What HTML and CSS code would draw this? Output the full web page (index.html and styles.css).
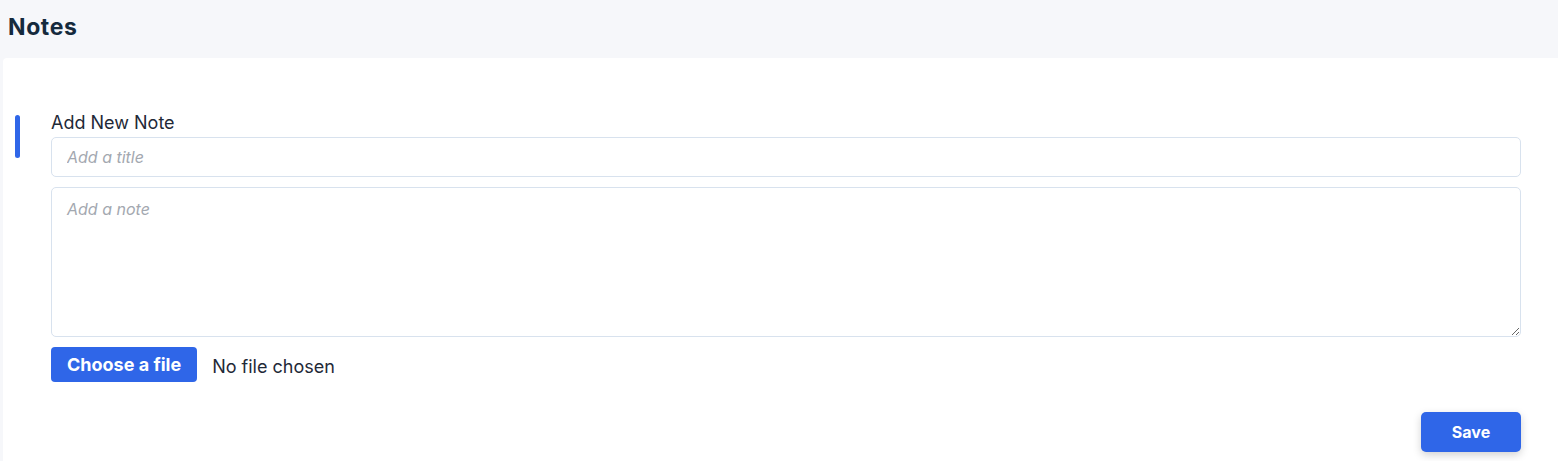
FILE: index.html
```html
<!doctype html>
<html lang="en">
  <head>
    <meta charset="UTF-8" />
    <meta name="viewport" content="width=device-width, initial-scale=1.0" />
    <title>Notes</title>
    <link rel="stylesheet" href="styles.css">
  </head>
  <body>
    <header class="page-header">
      <h1>Notes</h1>
    </header>

    <main class="notes-card">
      <div class="note-form">
        <div class="accent-bar"></div>
        <div class="form-body">
          <label class="form-label" for="note-title">Add New Note</label>
          <input id="note-title" class="field" type="text" placeholder="Add a title" />
          <textarea class="field field-note" placeholder="Add a note"></textarea>

          <div class="file-row">
            <label class="file-button" for="note-file">Choose a file</label>
            <input id="note-file" class="file-input" type="file" />
            <span class="file-name">No file chosen</span>
          </div>

          <div class="actions">
            <button class="save-button" type="button">Save</button>
          </div>
        </div>
      </div>
    </main>
  </body>
</html>
```

FILE: styles.css
```css
:root {
  --color-primary: #2f66e8;
  --color-page: #f6f7fa;
  --color-title: #152a3d;
  --color-text: #1f2937;
  --color-border: #d8e2ee;
  --color-placeholder: #a3a8b0;
  --font-sans: Inter, "Noto Sans", sans-serif;
}

body {
  margin: 0;
  background: var(--color-page);
  font-family: var(--font-sans);
  color: var(--color-text);
}

.page-header {
  height: 58px;
  padding: 0 8px;
  box-sizing: border-box;
}

.page-header h1 {
  margin: 0;
  padding-top: 12px;
  font-size: 23px;
  line-height: 30px;
  font-weight: 700;
  letter-spacing: 0.6px;
  color: var(--color-title);
}

.notes-card {
  margin-left: 3px;
  background: white;
  border-top-left-radius: 4px;
  padding: 54px 37px 9px 12px;
  min-height: 403px;
  box-sizing: border-box;
}

.note-form {
  display: flex;
  gap: 31px;
}

.accent-bar {
  flex: none;
  width: 5px;
  height: 43px;
  margin-top: 3px;
  border-radius: 3px;
  background: var(--color-primary);
}

.form-body {
  flex: 1;
  display: flex;
  flex-direction: column;
}

.form-label {
  font-size: 18px;
  line-height: 22px;
  margin-bottom: 3px;
  color: var(--color-text);
}

.field {
  font-family: var(--font-sans);
  font-size: 16px;
  color: var(--color-text);
  border: 1px solid var(--color-border);
  border-radius: 5px;
  padding: 0 15px;
  height: 40px;
  box-sizing: border-box;
  outline: none;
  margin-bottom: 10px;
}

.field::placeholder {
  color: var(--color-placeholder);
  font-style: italic;
}

.field-note {
  height: 150px;
  padding-top: 11px;
  resize: vertical;
}

.file-row {
  display: flex;
  align-items: center;
  gap: 15px;
}

.file-button {
  background: var(--color-primary);
  color: white;
  font-size: 18px;
  font-weight: 700;
  height: 35px;
  line-height: 35px;
  padding: 0 16px;
  border-radius: 4px;
  cursor: pointer;
}

.file-input {
  display: none;
}

.file-name {
  font-size: 18px;
  padding-top: 4px;
  color: var(--color-text);
}

.actions {
  display: flex;
  justify-content: flex-end;
  margin-top: 30px;
}

.save-button {
  width: 100px;
  height: 40px;
  border: none;
  border-radius: 5px;
  background: var(--color-primary);
  color: white;
  font-family: var(--font-sans);
  font-size: 16px;
  font-weight: 700;
  cursor: pointer;
  box-shadow: 0 3px 8px rgba(0, 0, 0, 0.18);
}
```
